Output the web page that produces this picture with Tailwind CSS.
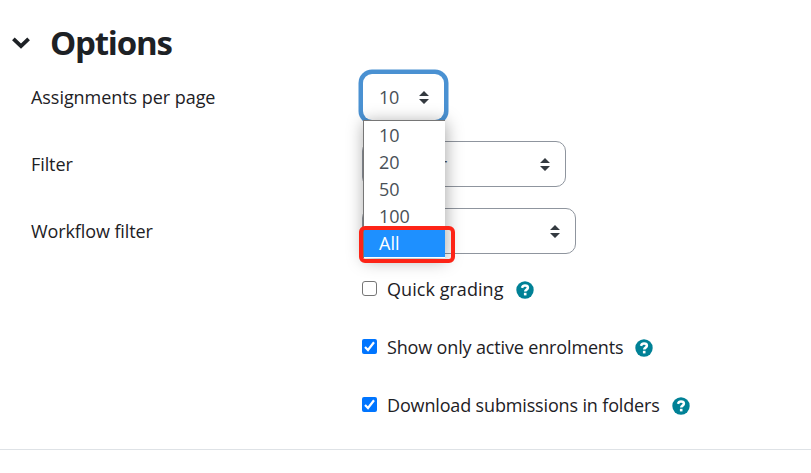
<!DOCTYPE html>
<html lang="en">
  <head>
    <meta charset="utf-8">
    <title>Options</title>
    <script src="https://cdn.jsdelivr.net/npm/@tailwindcss/browser@4"></script>
  </head>

  <body class="bg-white h-[473px] overflow-hidden font-['Open_Sans','Noto_Sans',sans-serif] text-[18px] leading-[27px] text-[#1d2125]">
    <svg class="hidden">
      <symbol id="sort" viewBox="0 0 10 13">
        <path fill="#343a40" d="M5 0 10 5H0zM0 8h10L5 13z"/>
      </symbol>
      <symbol id="help" viewBox="0 0 18 18">
        <circle cx="9" cy="9" r="8.7" fill="#008196"/>
        <path d="M6 6.8C6.5 5.3 7.6 4.6 9 4.6c1.7 0 2.9.9 2.9 2.2 0 1.9-2.7 1.8-2.7 3.8" fill="none" stroke="#fff" stroke-width="2.5"/>
        <path d="M7.9 11.8h2.6v2.6H7.9z" fill="#fff"/>
      </symbol>
    </svg>

    <div class="flex items-center h-[74px] pl-3 pt-3">
      <svg class="w-[18px] h-3 mr-5" viewBox="0 0 18 12" fill="none" stroke="#1d2125" stroke-width="3.8">
        <path d="M1.4 1.8 9 9.2l7.6-7.4"/>
      </svg>
      <h3 class="text-[33px] leading-10 font-bold tracking-[-1.2px]">Options</h3>
    </div>

    <div class="flex flex-col gap-[21px] pl-[31px]">
      <div class="flex items-center">
        <label class="w-[332px] tracking-[-0.05px]">Assignments per page</label>
        <div class="relative">
          <div class="flex items-center justify-between w-[81px] h-[46px] pl-4 pr-[15px] rounded-[9px] bg-white ring-[4.5px] ring-[#4a91d2] text-[#495057]">
            <span class="tracking-[-0.3px]">10</span>
            <svg class="w-[10px] h-[13px]"><use href="#sort"/></svg>
          </div>
          <ul class="absolute z-10 top-[46px] left-0 w-[82px] h-[138px] pt-px bg-white border-t border-l border-[#767676] shadow-[1px_2px_16px_rgba(0,0,0,0.35)] text-[#495057]">
            <li class="pl-[15px]">10</li>
            <li class="pl-[15px]">20</li>
            <li class="pl-[15px]">50</li>
            <li class="pl-[15px]">100</li>
            <li class="pl-[15px] bg-[#1e90ff] text-white">All</li>
          </ul>
          <div class="absolute z-20 top-[152px] -left-1 w-24 h-[37px] border-4 border-[#fd2417] rounded-[6px]"></div>
        </div>
      </div>

      <div class="flex items-center">
        <label class="w-[331px] tracking-[-0.1px]">Filter</label>
        <div class="flex items-center justify-between w-[204px] h-[46px] pl-4 pr-[15px] border border-[#8f959e] rounded-[10px] text-[#495057]">
          <span>No filter</span>
          <svg class="w-[10px] h-[13px]"><use href="#sort"/></svg>
        </div>
      </div>

      <div class="flex items-center">
        <label class="w-[331px] tracking-[-0.1px]">Workflow filter</label>
        <div class="flex items-center justify-end w-[214px] h-[46px] pr-[15px] border border-[#8f959e] rounded-[10px]">
          <svg class="w-[10px] h-[13px]"><use href="#sort"/></svg>
        </div>
      </div>
    </div>

    <div class="flex flex-col gap-[31px] pl-[362px] mt-[22px] tracking-[-0.15px]">
      <div class="flex items-center h-[27px]">
        <div class="w-[15px] h-[15px] mr-[10px] mb-[2px] border border-[#767676] rounded-[3px]"></div>
        <span class="tracking-[0.05px]">Quick grading</span>
        <svg class="w-[18px] h-[18px] ml-3"><use href="#help"/></svg>
      </div>
      <div class="flex items-center h-[27px]">
        <svg class="w-[15px] h-[15px] mr-[10px] mb-[2px]" viewBox="0 0 15 15">
          <rect width="15" height="15" rx="2" fill="#0075ff"/>
          <path d="m3 8 3 3 6-7.7" fill="none" stroke="#fff" stroke-width="2.2"/>
        </svg>
        <span>Show only active enrolments</span>
        <svg class="w-[18px] h-[18px] ml-3"><use href="#help"/></svg>
      </div>
      <div class="flex items-center h-[27px]">
        <svg class="w-[15px] h-[15px] mr-[10px] mb-[2px]" viewBox="0 0 15 15">
          <rect width="15" height="15" rx="2" fill="#0075ff"/>
          <path d="m3 8 3 3 6-7.7" fill="none" stroke="#fff" stroke-width="2.2"/>
        </svg>
        <span>Download submissions in folders</span>
        <svg class="w-[18px] h-[18px] ml-3"><use href="#help"/></svg>
      </div>
    </div>

    <hr class="mt-[30px] border-[#dee2e6]">
  </body>
</html>
